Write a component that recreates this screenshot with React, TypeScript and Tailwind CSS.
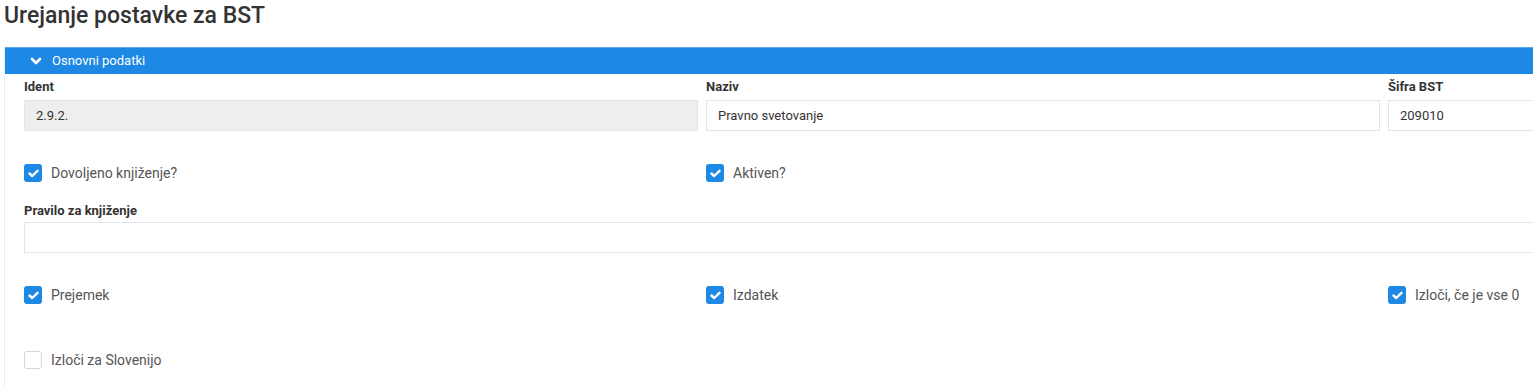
import React from "react";

type Box = { label: string; checked: boolean };

function Check({ label, checked }: Box) {
  return (
    <label className="flex items-center h-[18px]">
      {checked ? (
        <span className="w-[18px] h-[18px] rounded-[3px] bg-[#1e88e5] flex items-center justify-center">
          <svg width="11" height="9" viewBox="0 0 11 9">
            <polyline points="1.5,4.5 4.2,7 9.5,1.8" fill="none" stroke="white" strokeWidth="2.4" strokeLinecap="round" strokeLinejoin="round" />
          </svg>
        </span>
      ) : (
        <span className="w-[18px] h-[18px] rounded-[3px] border border-[#d6d6d6] bg-white" />
      )}
      <span className="ml-[9px] text-[14px] text-[#555]">{label}</span>
    </label>
  );
}

function Field({ label, value, disabled }: { label: string; value: string; disabled?: boolean }) {
  return (
    <div>
      <div className="h-[18px] leading-[18px] text-[13px] font-bold text-[#333]">{label}</div>
      <div
        className={`mt-[4px] h-[31px] border border-[#dfe5ec] px-[11px] flex items-center text-[13px] text-[#333] ${
          disabled ? "bg-[#eeeeee]" : "bg-white"
        }`}
      >
        {value}
      </div>
    </div>
  );
}

export default function App() {
  return (
    <div className="w-[1533px] h-[386px] overflow-hidden bg-white font-['Roboto',sans-serif]">
      <h1 className="pl-[4px] pt-[1px] h-[32px] leading-[30px] text-[23px] font-medium text-[#333]">Urejanje postavke za BST</h1>

      <div className="ml-[4px] mt-[15px] w-[2100px] border-l border-[#ececec] pb-[20px]">
        <div className="h-[27px] bg-[#1e88e5] border-t border-[#5aa6ec] flex items-center pl-[25px] text-white text-[13px]">
          <svg width="12" height="9" viewBox="0 0 12 9" className="mr-[10px]">
            <polyline points="2,2 6,6 10,2" fill="none" stroke="white" strokeWidth="2.6" strokeLinecap="round" strokeLinejoin="round" />
          </svg>
          Osnovni podatki
        </div>

        <div className="pl-[19px]">
          <div className="pt-[4px] grid grid-cols-[674px_674px_674px] gap-x-[8px]">
            <Field label="Ident" value="2.9.2." disabled />
            <Field label="Naziv" value="Pravno svetovanje" />
            <Field label="Šifra BST" value="209010" />
          </div>

          <div className="mt-[33px] grid grid-cols-[674px_674px_674px] gap-x-[8px]">
            <Check label="Dovoljeno knjiženje?" checked />
            <Check label="Aktiven?" checked />
          </div>

          <div className="mt-[20px]">
            <div className="h-[18px] leading-[18px] text-[13px] font-bold text-[#333]">Pravilo za knjiženje</div>
            <div className="mt-[2px] h-[31px] w-[2038px] border border-[#dfe5ec] bg-white" />
          </div>

          <div className="mt-[33px] grid grid-cols-[674px_674px_674px] gap-x-[8px]">
            <Check label="Prejemek" checked />
            <Check label="Izdatek" checked />
            <Check label="Izloči, če je vse 0" checked />
          </div>

          <div className="mt-[47px]">
            <Check label="Izloči za Slovenijo" checked={false} />
          </div>
        </div>
      </div>
    </div>
  );
}
